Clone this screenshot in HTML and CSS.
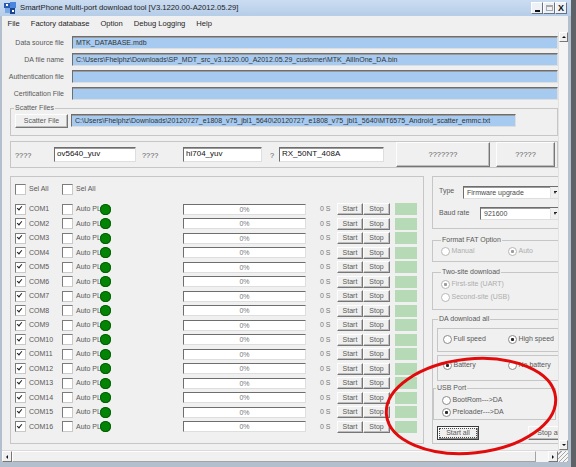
FILE: index.html
```html
<!DOCTYPE html>
<html>

<head lang="en">
  <meta charset="UTF-8">
  <title>SmartPhone Multi-port download tool</title>
  <link rel="stylesheet" href="styles.css">
</head>

<body>
  <div class="window">
    <div class="titlebar">
      <svg class="app-icon" viewBox="0 0 12 12">
        <rect x="0" y="1" width="6" height="5" fill="#2a5cb5" />
        <rect x="6" y="0" width="6" height="6" fill="#4a86dc" />
        <rect x="1" y="6" width="5" height="5" fill="#7aa9ea" />
        <rect x="6" y="6" width="5" height="6" fill="#1d468f" />
        <rect x="2" y="2" width="2" height="2" fill="#fff" />
        <rect x="8" y="8" width="2" height="2" fill="#fff" />
      </svg>
      <span class="title">SmartPhone Multi-port download tool [V3.1220.00-A2012.05.29]</span>
      <div class="caption">
        <span class="cap"><i class="ico-min"></i></span>
        <span class="cap"><i class="ico-max"></i></span>
        <span class="cap cap-close">X</span>
      </div>
    </div>

    <div class="menubar">
      <span>File</span>
      <span>Factory database</span>
      <span>Option</span>
      <span>Debug Logging</span>
      <span>Help</span>
    </div>

    <div class="client">
      <div class="pane">
        <div class="field"><label>Data source file</label><div class="tb">MTK_DATABASE.mdb</div></div>
        <div class="field"><label>DA file name</label><div class="tb">C:\Users\Fhelphz\Downloads\SP_MDT_src_v3.1220.00_A2012.05.29_customer\MTK_AllInOne_DA.bin</div></div>
        <div class="field"><label>Authentication file</label><div class="tb"></div></div>
        <div class="field"><label>Certification File</label><div class="tb"></div></div>

        <fieldset class="scatter">
          <legend>Scatter Files</legend>
          <div class="scatter-row">
            <button class="btn btn-scatter">Scatter File</button>
            <div class="tb tb-scatter">C:\Users\Fhelphz\Downloads\20120727_e1808_v75_jbl1_5640\20120727_e1808_v75_jbl1_5640\MT6575_Android_scatter_emmc.txt</div>
          </div>
        </fieldset>

        <div class="sensors">
          <span class="q q1">????</span><div class="wt wt1">ov5640_yuv</div>
          <span class="q q2">????</span><div class="wt wt2">hi704_yuv</div>
          <span class="q q3">?</span><div class="wt wt3">RX_50NT_408A</div>
          <button class="btn big big1">???????</button>
          <button class="btn big big2">?????</button>
        </div>

        <div class="main">
          <div class="ports">
            <div class="selrow">
              <span class="chk w-com">Sel All</span>
              <span class="chk">Sel All</span>
            </div>
            <div class="com"><span class="chk on w-com">COM1</span><span class="chk w-auto">Auto PL</span><i class="led"></i><span class="bar">0%</span><span class="secs">0 S</span><button class="btn mini">Start</button><button class="btn mini">Stop</button><i class="ok"></i></div>
            <div class="com"><span class="chk on w-com">COM2</span><span class="chk w-auto">Auto PL</span><i class="led"></i><span class="bar">0%</span><span class="secs">0 S</span><button class="btn mini">Start</button><button class="btn mini">Stop</button><i class="ok"></i></div>
            <div class="com"><span class="chk on w-com">COM3</span><span class="chk w-auto">Auto PL</span><i class="led"></i><span class="bar">0%</span><span class="secs">0 S</span><button class="btn mini">Start</button><button class="btn mini">Stop</button><i class="ok"></i></div>
            <div class="com"><span class="chk on w-com">COM4</span><span class="chk w-auto">Auto PL</span><i class="led"></i><span class="bar">0%</span><span class="secs">0 S</span><button class="btn mini">Start</button><button class="btn mini">Stop</button><i class="ok"></i></div>
            <div class="com"><span class="chk on w-com">COM5</span><span class="chk w-auto">Auto PL</span><i class="led"></i><span class="bar">0%</span><span class="secs">0 S</span><button class="btn mini">Start</button><button class="btn mini">Stop</button><i class="ok"></i></div>
            <div class="com"><span class="chk on w-com">COM6</span><span class="chk w-auto">Auto PL</span><i class="led"></i><span class="bar">0%</span><span class="secs">0 S</span><button class="btn mini">Start</button><button class="btn mini">Stop</button><i class="ok"></i></div>
            <div class="com"><span class="chk on w-com">COM7</span><span class="chk w-auto">Auto PL</span><i class="led"></i><span class="bar">0%</span><span class="secs">0 S</span><button class="btn mini">Start</button><button class="btn mini">Stop</button><i class="ok"></i></div>
            <div class="com"><span class="chk on w-com">COM8</span><span class="chk w-auto">Auto PL</span><i class="led"></i><span class="bar">0%</span><span class="secs">0 S</span><button class="btn mini">Start</button><button class="btn mini">Stop</button><i class="ok"></i></div>
            <div class="com"><span class="chk on w-com">COM9</span><span class="chk w-auto">Auto PL</span><i class="led"></i><span class="bar">0%</span><span class="secs">0 S</span><button class="btn mini">Start</button><button class="btn mini">Stop</button><i class="ok"></i></div>
            <div class="com"><span class="chk on w-com">COM10</span><span class="chk w-auto">Auto PL</span><i class="led"></i><span class="bar">0%</span><span class="secs">0 S</span><button class="btn mini">Start</button><button class="btn mini">Stop</button><i class="ok"></i></div>
            <div class="com"><span class="chk on w-com">COM11</span><span class="chk w-auto">Auto PL</span><i class="led"></i><span class="bar">0%</span><span class="secs">0 S</span><button class="btn mini">Start</button><button class="btn mini">Stop</button><i class="ok"></i></div>
            <div class="com"><span class="chk on w-com">COM12</span><span class="chk w-auto">Auto PL</span><i class="led"></i><span class="bar">0%</span><span class="secs">0 S</span><button class="btn mini">Start</button><button class="btn mini">Stop</button><i class="ok"></i></div>
            <div class="com"><span class="chk on w-com">COM13</span><span class="chk w-auto">Auto PL</span><i class="led"></i><span class="bar">0%</span><span class="secs">0 S</span><button class="btn mini">Start</button><button class="btn mini">Stop</button><i class="ok"></i></div>
            <div class="com"><span class="chk on w-com">COM14</span><span class="chk w-auto">Auto PL</span><i class="led"></i><span class="bar">0%</span><span class="secs">0 S</span><button class="btn mini">Start</button><button class="btn mini">Stop</button><i class="ok"></i></div>
            <div class="com"><span class="chk on w-com">COM15</span><span class="chk w-auto">Auto PL</span><i class="led"></i><span class="bar">0%</span><span class="secs">0 S</span><button class="btn mini">Start</button><button class="btn mini">Stop</button><i class="ok"></i></div>
            <div class="com"><span class="chk on w-com">COM16</span><span class="chk w-auto">Auto PL</span><i class="led"></i><span class="bar">0%</span><span class="secs">0 S</span><button class="btn mini">Start</button><button class="btn mini">Stop</button><i class="ok"></i></div>
          </div>

          <div class="side">
            <div class="gbox g-type">
              <div class="pick"><span class="pl-type">Type</span><span class="dd">Firmware upgrade<i class="arr"></i></span></div>
              <div class="pick"><span class="pl-baud">Baud rate</span><span class="dd">921600<i class="arr"></i></span></div>
            </div>

            <fieldset class="grp fat">
              <legend>Format FAT Option</legend>
              <div class="opts"><span class="rad dis w-opt">Manual</span><span class="rad dis on">Auto</span></div>
            </fieldset>

            <fieldset class="grp two">
              <legend>Two-site download</legend>
              <span class="rad dis on">First-site (UART)</span>
              <span class="rad dis">Second-site (USB)</span>
            </fieldset>

            <fieldset class="grp da">
              <legend>DA download all</legend>
              <div class="sub speed">
                <div class="opts"><span class="rad w-sub">Full speed</span><span class="rad on">High speed</span></div>
              </div>
              <div class="sub batt">
                <div class="opts"><span class="rad on w-sub">Battery</span><span class="rad">No battery</span></div>
              </div>
              <fieldset class="grp usb">
                <legend>USB Port</legend>
                <span class="rad">BootRom---&gt;DA</span>
                <span class="rad on">Preloader---&gt;DA</span>
              </fieldset>
              <div class="actions">
                <button class="btn act default">Start all</button>
                <button class="btn act stop">Stop all</button>
              </div>
            </fieldset>
          </div>
        </div>
      </div>

      <div class="vscroll">
        <span class="sb-btn"><i class="tri-up"></i></span>
        <span class="sb-btn"><i class="tri-down"></i></span>
      </div>
    </div>

    <div class="hscroll">
      <span class="sb-btn"><i class="tri-left"></i></span>
      <span class="thumb"></span>
      <span class="track"></span>
      <span class="sb-btn"><i class="tri-right"></i></span>
      <span class="grip"></span>
    </div>
  </div>

  <!-- hand drawn marker over the USB options -->
  <svg class="mark" viewBox="0 0 576 467">
    <ellipse cx="471" cy="406" rx="85" ry="47" transform="rotate(-6 471 406)" />
  </svg>
</body>

</html>
```

FILE: styles.css
```css
* {
  box-sizing: border-box;
}

html,
body {
  margin: 0;
  padding: 0;
}

body {
  position: relative;
  width: 576px;
  height: 467px;
  overflow: hidden;
  background: #5e6166;
  font: 7px/8px "Liberation Sans", Arial, sans-serif;
  color: #595959;
}

i {
  display: block;
}

/* window frame */
.window {
  width: 571px;
  height: 467px;
  padding: 0 3px 5px 2px;
  background: #b3bfcd;
  display: flex;
  flex-direction: column;
}

.titlebar {
  height: 16px;
  margin: 0 -3px 0 -2px;
  padding-left: 4px;
  background: linear-gradient(#cadcf1, #b6cde8);
  display: flex;
  align-items: center;
  flex: none;
}

.app-icon {
  width: 12px;
  height: 12px;
  margin-right: 4px;
}

.title {
  font-size: 7.7px;
  color: #1d1d1d;
}

.caption {
  margin-left: auto;
  margin-right: 4px;
  display: flex;
}

.cap {
  width: 12px;
  height: 12px;
  background: #eef1f5;
  border: 1px solid;
  border-color: #fff #667386 #667386 #fff;
  display: flex;
  align-items: center;
  justify-content: center;
}

.ico-min {
  width: 5px;
  height: 2px;
  margin-top: 5px;
  background: #111;
}

.ico-max {
  width: 7px;
  height: 6px;
  border: 1px solid #a8a8a8;
  border-top-width: 2px;
}

.cap-close {
  font: bold 9px/10px "Liberation Sans", Arial, sans-serif;
  color: #111;
}

.menubar {
  height: 16px;
  background: #f0f0f0;
  display: flex;
  align-items: center;
  flex: none;
  font-size: 7.6px;
  color: #1f1f1f;
}

.menubar span {
  padding: 0 5.5px;
}

.client {
  height: 418px;
  display: flex;
  flex: none;
}

.pane {
  width: 556px;
  flex: none;
  overflow: hidden;
  background: #f0f0f0;
  padding-top: 4px;
}

/* classic controls */
.tb,
.wt,
.dd,
.bar {
  border: 1px solid;
  border-color: #6e6e6e #dedede #dedede #6e6e6e;
  box-shadow: inset 0 1px 0 #9a9a9a;
  white-space: nowrap;
  overflow: hidden;
}

.tb {
  flex: 1;
  height: 13px;
  margin-left: 8px;
  padding-left: 3px;
  background: #a6caf0;
  line-height: 11px;
  color: #333;
}

.btn {
  font: inherit;
  color: #595959;
  padding: 0;
  background: #f0f0f0;
  border: 1px solid;
  border-color: #fdfdfd #767676 #767676 #fdfdfd;
  box-shadow: inset -1px -1px 0 #bdbdbd;
  white-space: nowrap;
  flex: none;
}

.field {
  display: flex;
  align-items: center;
  height: 13px;
  margin-bottom: 4px;
}

.field label {
  width: 62px;
  flex: none;
  text-align: right;
  white-space: nowrap;
}

/* scatter files */
fieldset {
  margin: 0;
  min-width: 0;
  border: 1px solid #c6c6c6;
}

legend {
  padding: 0 1px;
  line-height: 8px;
}

.scatter {
  margin: 2px 0 0 8px;
  padding: 2px 0 7px 4px;
}

.scatter legend {
  margin-left: -1px;
}

.scatter-row {
  display: flex;
}

.btn-scatter {
  width: 53px;
  height: 14px;
}

.tb-scatter {
  flex: none;
  width: 445px;
  margin-left: 3px;
}

/* sensor row */
.sensors {
  height: 27px;
  margin: 5px 0 0 8px;
  border: 1px solid #c6c6c6;
  display: flex;
  align-items: center;
}

.q {
  flex: none;
  padding-top: 2px;
  font-size: 7.4px;
}

.q1 {
  margin-left: 4px;
  width: 39px;
}

.q2 {
  margin-left: 6px;
  width: 41px;
}

.q3 {
  margin-left: 8px;
  width: 9px;
}

.wt {
  flex: none;
  height: 15px;
  padding-left: 2px;
  background: #fff;
  font-size: 8px;
  line-height: 11px;
  color: #111;
}

.wt1 {
  width: 82px;
}

.wt2 {
  width: 79px;
}

.wt3 {
  width: 105px;
}

.big {
  align-self: stretch;
  font-size: 7.4px;
}

.big1 {
  margin-left: 12px;
  width: 94px;
}

.big2 {
  margin-left: 6px;
  width: 59px;
}

/* port list */
.main {
  display: flex;
  margin: 8px 0 0 8px;
}

.ports {
  flex: none;
  width: 414px;
  height: 268px;
  border: 1px solid #c6c6c6;
  padding: 5px 0 0 4px;
}

.selrow {
  display: flex;
  align-items: center;
  height: 14px;
  margin-bottom: 5.75px;
}

.com {
  display: flex;
  align-items: center;
  height: 14.5px;
}

.chk {
  position: relative;
  display: flex;
  align-items: center;
  flex: none;
  white-space: nowrap;
}

.chk::before {
  content: '';
  flex: none;
  width: 9px;
  height: 9px;
  margin-right: 3px;
  background: #fff;
  border: 1px solid;
  border-color: #7b7b7b #c9c9c9 #c9c9c9 #7b7b7b;
}

.chk.on::after {
  content: '';
  position: absolute;
  left: 2px;
  top: 50%;
  margin-top: -3px;
  width: 4px;
  height: 2px;
  border-left: 1.5px solid #1e1e1e;
  border-bottom: 1.5px solid #1e1e1e;
  transform: rotate(-50deg);
}

.w-com {
  width: 47px;
}

.w-auto {
  width: 38px;
}

.led {
  flex: none;
  width: 11px;
  height: 11px;
  border-radius: 50%;
  background: #048404;
  box-shadow: inset 0 0 0 1px #036003;
}

.bar {
  flex: none;
  margin-left: 72px;
  width: 123px;
  height: 11px;
  background: #fff;
  box-shadow: none;
  text-align: center;
  line-height: 9px;
  color: #777;
}

.secs {
  flex: none;
  margin-left: 14px;
  width: 17px;
  color: #777;
}

.mini {
  width: 26px;
  height: 12px;
  line-height: 10px;
}

.mini + .mini {
  width: 27px;
}

.ok {
  flex: none;
  margin-left: 5px;
  width: 22px;
  height: 12px;
  background: #b6d9b6;
}

/* right side options */
.side {
  flex: none;
  width: 129px;
  margin-left: 8px;
}

.gbox {
  border: 1px solid #c6c6c6;
}

.g-type {
  padding: 9px 0 8px 6px;
}

.pick {
  display: flex;
  align-items: center;
  height: 13px;
}

.pick + .pick {
  margin-top: 8px;
}

.pl-type {
  width: 24px;
  flex: none;
  margin-top: -4px;
}

.pl-baud {
  width: 41px;
  flex: none;
  margin-top: -2px;
}

.dd {
  flex: 1;
  height: 13px;
  display: flex;
  padding-left: 3px;
  background: #fff;
  line-height: 11px;
  color: #4a4a4a;
}

.dd .arr {
  margin-left: auto;
  width: 9px;
  height: 11px;
  background: #f0f0f0 linear-gradient(#222, #222) no-repeat 3px 4px / 3px 1px;
  border-left: 1px solid #e4e4e4;
  position: relative;
}

.dd .arr::after {
  content: '';
  position: absolute;
  left: 3px;
  top: 5px;
  border-left: 1.5px solid transparent;
  border-right: 1.5px solid transparent;
  border-top: 2px solid #222;
}

.grp {
  padding: 2px 0 5px 8px;
}

.fat {
  margin-top: 7px;
}

.opts {
  display: flex;
  align-items: center;
  height: 10px;
}

.rad {
  display: flex;
  align-items: center;
  height: 10px;
  flex: none;
  white-space: nowrap;
  color: #595959;
}

.rad::before {
  content: '';
  flex: none;
  width: 7px;
  height: 7px;
  margin-right: 1.5px;
  border-radius: 50%;
  border: 1px solid #8c8c8c;
  background: #fff;
}

.rad.on::before {
  background: radial-gradient(circle, #2a2a2a 0 1.3px, #fff 1.8px);
}

.rad.dis {
  color: #adadad;
}

.rad.dis::before {
  border-color: #b8b8b8;
}

.rad.dis.on::before {
  background: radial-gradient(circle, #9c9c9c 0 1.3px, #fff 1.8px);
}

.w-opt {
  width: 67px;
}

.w-sub {
  width: 65px;
}

.two {
  margin-top: 6px;
  padding: 3px 0 7px 8px;
}

.two .rad + .rad {
  margin-top: 3px;
}

.da {
  margin-top: 5px;
  padding: 5px 0 3px 4px;
}

.da > legend {
  margin-left: 1px;
}

.sub {
  border: 1px solid #c6c6c6;
}

.speed {
  padding: 5px 0 7px 5px;
}

.batt {
  margin-top: 3px;
  padding: 4px 0 10px 5px;
}

.usb {
  margin: 3px 4px 0 -4px;
  padding: 3px 0 2px 8px;
}

.usb legend {
  margin-left: -6px;
}

.usb .rad + .rad {
  margin-top: 2px;
}

.actions {
  display: flex;
  margin-top: 6px;
}

.act {
  width: 42px;
  height: 14px;
}

.default {
  border-color: #3c3c3c;
  box-shadow: inset 1px 1px 0 #fff, inset -1px -1px 0 #8a8a8a;
  outline: 1px dotted #4a4a4a;
  outline-offset: -3px;
}

.stop {
  margin-left: 49px;
}

/* scroll bars */
.vscroll {
  width: 10px;
  flex: none;
  background: #f4f4f4;
  border-left: 1px solid #e2e2e2;
  display: flex;
  flex-direction: column;
  justify-content: space-between;
}

.sb-btn {
  width: 10px;
  height: 10px;
  flex: none;
  background: #f0f0f0;
  border: 1px solid;
  border-color: #fdfdfd #777 #777 #fdfdfd;
  display: flex;
  align-items: center;
  justify-content: center;
}

.vscroll .sb-btn {
  width: 9px;
}

.tri-up,
.tri-down {
  border-left: 2px solid transparent;
  border-right: 2px solid transparent;
}

.tri-up {
  border-bottom: 2.5px solid #111;
}

.tri-down {
  border-top: 2.5px solid #111;
}

.tri-left,
.tri-right {
  border-top: 2px solid transparent;
  border-bottom: 2px solid transparent;
}

.tri-left {
  border-right: 2.5px solid #111;
}

.tri-right {
  border-left: 2.5px solid #111;
}

.hscroll {
  height: 12px;
  flex: none;
  display: flex;
  background: #f4f4f4;
  border-top: 1px solid #dadada;
}

.hscroll .sb-btn {
  height: 11px;
}

.thumb {
  width: 524px;
  flex: none;
  background: #f0f0f0;
  border: 1px solid;
  border-color: #fdfdfd #a3a3a3 #a3a3a3 #fdfdfd;
}

.track {
  flex: 1;
}

.grip {
  width: 10px;
  flex: none;
  background: repeating-linear-gradient(135deg, #f4f4f4 0 2px, #a8a8a8 2px 3px);
}

/* red marker */
.mark {
  position: absolute;
  left: 0;
  top: 0;
  width: 576px;
  height: 467px;
  pointer-events: none;
}

.mark ellipse {
  fill: none;
  stroke: #e10b0b;
  stroke-width: 3;
}
```
